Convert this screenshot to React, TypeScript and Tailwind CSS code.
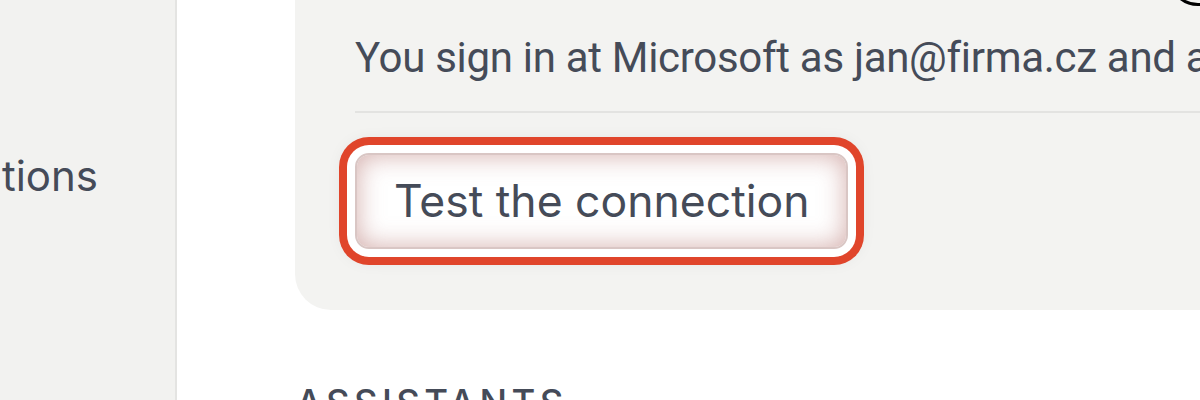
export default function App() {
  return (
    <div
      className="flex h-[400px] w-[1200px] overflow-hidden bg-white text-[#454b58]"
      style={{ fontFamily: 'Inter, "Noto Sans", sans-serif' }}
    >
      <aside className="w-[177px] shrink-0 overflow-hidden border-r-2 border-[#e4e4e2] bg-[#f2f2f0]">
        <div className="mt-[147px] flex w-[98px] justify-end">
          <span className="shrink-0 whitespace-nowrap text-[42px] leading-[58px]">Integrations</span>
        </div>
      </aside>

      <main className="relative min-w-0 flex-1 pl-[118px]">
        <section className="relative w-[1100px] rounded-bl-[36px] bg-[#f3f3f1] px-[60px] pb-[61px] pt-[30px]">
          <div className="absolute left-[873px] top-[-60px] h-[66px] w-[120px] rounded-[30px] border-[3px] border-black" />
          <p
            className="whitespace-nowrap text-[42px] leading-[56px] tracking-[-0.3px]"
            style={{ fontFamily: 'Roboto, "Noto Sans", sans-serif' }}
          >
            You sign in at Microsoft as jan@firma.cz and all your access rights apply
          </p>
          <div className="mt-[25px] h-[2px] bg-[#e3e3e1]" />
          <div className="mt-[40px]">
            <button className="h-[96px] rounded-[14px] border-2 border-[#d9c6c4] bg-white px-[37px] text-[44.5px] leading-none text-[#454b58] shadow-[0_0_18px_10px_rgba(0,0,0,0.10)] ring-[8px] ring-[#e0452b] ring-offset-[8px] ring-offset-white inset-shadow-[0_0_26px_rgba(175,105,100,0.55)]">
              Test the connection
            </button>
          </div>
        </section>
        <h2 className="mt-[69px] pl-[1px] text-[36.5px] font-medium uppercase leading-[48px] tracking-[0.12em]">
          Assistants
        </h2>
      </main>
    </div>
  )
}
